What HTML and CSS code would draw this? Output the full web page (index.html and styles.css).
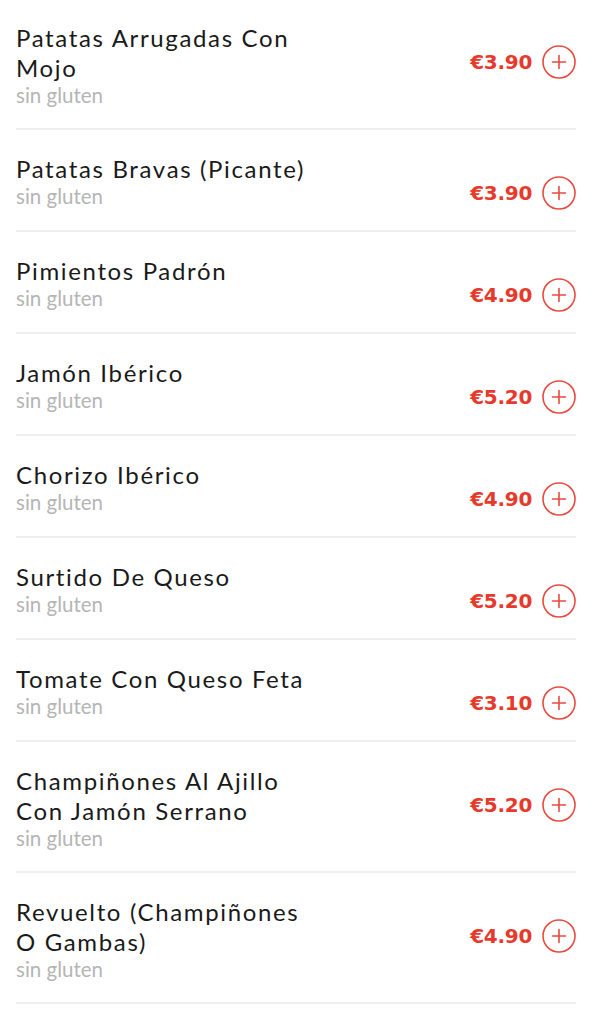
FILE: index.html
```html
<!DOCTYPE html>
<html lang="es">
<head>
<meta charset="utf-8">
<title>Menu</title>
<link rel="stylesheet" href="styles.css">
</head>
<body>
<ul class="menu">
  <li class="item"><div class="info"><div class="name">Patatas Arrugadas Con Mojo</div><div class="tag">sin gluten</div></div><div class="buy"><span class="price">€3.90</span><span class="add"><svg viewBox="0 0 34 34" width="34" height="34"><circle cx="17" cy="17" r="16" fill="none" stroke="#e84a3f" stroke-width="1.6"/><path d="M17 10.5v13M10.5 17h13" stroke="#e84a3f" stroke-width="1.6" stroke-linecap="round"/></svg></span></div></li>
  <li class="item"><div class="info"><div class="name">Patatas Bravas (Picante)</div><div class="tag">sin gluten</div></div><div class="buy"><span class="price">€3.90</span><span class="add"><svg viewBox="0 0 34 34" width="34" height="34"><circle cx="17" cy="17" r="16" fill="none" stroke="#e84a3f" stroke-width="1.6"/><path d="M17 10.5v13M10.5 17h13" stroke="#e84a3f" stroke-width="1.6" stroke-linecap="round"/></svg></span></div></li>
  <li class="item"><div class="info"><div class="name">Pimientos Padrón</div><div class="tag">sin gluten</div></div><div class="buy"><span class="price">€4.90</span><span class="add"><svg viewBox="0 0 34 34" width="34" height="34"><circle cx="17" cy="17" r="16" fill="none" stroke="#e84a3f" stroke-width="1.6"/><path d="M17 10.5v13M10.5 17h13" stroke="#e84a3f" stroke-width="1.6" stroke-linecap="round"/></svg></span></div></li>
  <li class="item"><div class="info"><div class="name">Jamón Ibérico</div><div class="tag">sin gluten</div></div><div class="buy"><span class="price">€5.20</span><span class="add"><svg viewBox="0 0 34 34" width="34" height="34"><circle cx="17" cy="17" r="16" fill="none" stroke="#e84a3f" stroke-width="1.6"/><path d="M17 10.5v13M10.5 17h13" stroke="#e84a3f" stroke-width="1.6" stroke-linecap="round"/></svg></span></div></li>
  <li class="item"><div class="info"><div class="name">Chorizo Ibérico</div><div class="tag">sin gluten</div></div><div class="buy"><span class="price">€4.90</span><span class="add"><svg viewBox="0 0 34 34" width="34" height="34"><circle cx="17" cy="17" r="16" fill="none" stroke="#e84a3f" stroke-width="1.6"/><path d="M17 10.5v13M10.5 17h13" stroke="#e84a3f" stroke-width="1.6" stroke-linecap="round"/></svg></span></div></li>
  <li class="item"><div class="info"><div class="name">Surtido De Queso</div><div class="tag">sin gluten</div></div><div class="buy"><span class="price">€5.20</span><span class="add"><svg viewBox="0 0 34 34" width="34" height="34"><circle cx="17" cy="17" r="16" fill="none" stroke="#e84a3f" stroke-width="1.6"/><path d="M17 10.5v13M10.5 17h13" stroke="#e84a3f" stroke-width="1.6" stroke-linecap="round"/></svg></span></div></li>
  <li class="item"><div class="info"><div class="name">Tomate Con Queso Feta</div><div class="tag">sin gluten</div></div><div class="buy"><span class="price">€3.10</span><span class="add"><svg viewBox="0 0 34 34" width="34" height="34"><circle cx="17" cy="17" r="16" fill="none" stroke="#e84a3f" stroke-width="1.6"/><path d="M17 10.5v13M10.5 17h13" stroke="#e84a3f" stroke-width="1.6" stroke-linecap="round"/></svg></span></div></li>
  <li class="item"><div class="info"><div class="name">Champiñones Al Ajillo Con Jamón Serrano</div><div class="tag">sin gluten</div></div><div class="buy"><span class="price">€5.20</span><span class="add"><svg viewBox="0 0 34 34" width="34" height="34"><circle cx="17" cy="17" r="16" fill="none" stroke="#e84a3f" stroke-width="1.6"/><path d="M17 10.5v13M10.5 17h13" stroke="#e84a3f" stroke-width="1.6" stroke-linecap="round"/></svg></span></div></li>
  <li class="item"><div class="info"><div class="name">Revuelto (Champiñones O Gambas)</div><div class="tag">sin gluten</div></div><div class="buy"><span class="price">€4.90</span><span class="add"><svg viewBox="0 0 34 34" width="34" height="34"><circle cx="17" cy="17" r="16" fill="none" stroke="#e84a3f" stroke-width="1.6"/><path d="M17 10.5v13M10.5 17h13" stroke="#e84a3f" stroke-width="1.6" stroke-linecap="round"/></svg></span></div></li>
</ul>
</body>
</html>
```
FILE: styles.css
```css
html, body {
  margin: 0;
  padding: 0;
  background: #ffffff;
}
body {
  font-family: Lato, "Noto Sans", sans-serif;
  overflow: hidden;
}
.menu {
  list-style: none;
  margin: -1px 0 0 0;
  padding: 0 16px;
}
.item {
  display: flex;
  justify-content: space-between;
  align-items: flex-start;
  padding: 24px 0 20px 0;
  border-bottom: 2px solid #f0f0f2;
}
.info {
  width: 300px;
  padding-bottom: 1px;
}
.name {
  font-size: 24px;
  line-height: 30px;
  letter-spacing: 1.65px;
  color: #1a1a1a;
}
.tag {
  font-size: 20.5px;
  line-height: 24px;
  color: #b5b5b5;
}
.buy {
  display: flex;
  align-items: center;
  gap: 10px;
  margin-top: 22px;
}
.price {
  font-family: "DejaVu Sans", sans-serif;
  font-weight: 700;
  font-size: 20px;
  letter-spacing: -0.3px;
  color: #e63a2c;
}
.add {
  display: flex;
  width: 34px;
  height: 34px;
}
```
